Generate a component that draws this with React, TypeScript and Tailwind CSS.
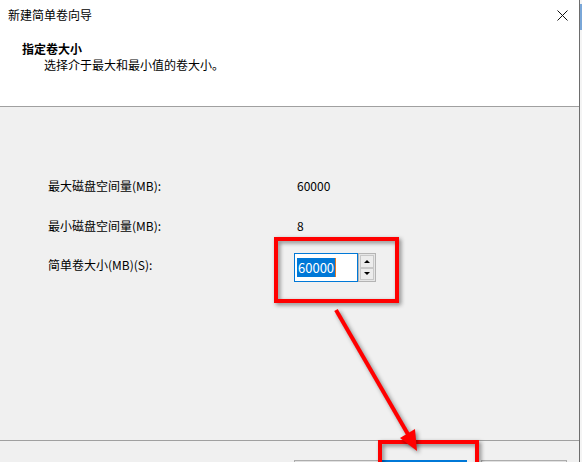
import React from "react";

const font = { fontFamily: '"Noto Sans CJK SC", "Noto Sans", sans-serif' };

function InfoRow({ label, value }: { label: string; value: string }) {
  return (
    <div className="flex h-4 items-center">
      <span className="w-[249px]">{label}</span>
      <span>{value}</span>
    </div>
  );
}

function SizeSpinner() {
  return (
    <div className="flex h-[29px]">
      <div className="flex h-full w-[64px] items-center border border-[#0078d7] bg-white pl-[2px]">
        <span className="bg-[#0078d7] px-px text-[13px] leading-[19px] text-white">60000</span>
        <span className="h-[19px] w-px bg-[#e8781f]" />
      </div>
      <div className="flex h-full w-[18px] flex-col border border-[#b4b4b4] bg-[#e6e6e6] p-px">
        <button className="flex flex-1 items-center justify-center border border-[#c8c8c8] bg-[#ececec]">
          <span className="h-0 w-0 border-x-[3px] border-b-[3px] border-x-transparent border-b-black" />
        </button>
        <button className="flex flex-1 items-center justify-center border border-[#c8c8c8] bg-[#ececec]">
          <span className="h-0 w-0 border-x-[3px] border-t-[3px] border-x-transparent border-t-black" />
        </button>
      </div>
    </div>
  );
}

export default function App() {
  return (
    <div
      className="relative flex h-[462px] w-[582px] overflow-hidden bg-white text-[12px] text-black"
      style={font}
    >
      <div className="flex w-[579px] flex-col">
        {/* title + page header */}
        <div className="h-[106px] shrink-0 bg-white">
          <div className="flex h-[30px] items-center justify-between pl-2 pr-[11px]">
            <span>新建简单卷向导</span>
            <svg width="11" height="11" viewBox="0 0 11 11">
              <path d="M0.5 0.5 L10.5 10.5 M10.5 0.5 L0.5 10.5" stroke="#111" strokeWidth="1" />
            </svg>
          </div>
          <div className="mt-[11px] pl-[22px] font-bold leading-4">指定卷大小</div>
          <div className="pl-[44px] leading-4">选择介于最大和最小值的卷大小。</div>
        </div>
        <div className="h-px shrink-0 bg-[#a0a0a0]" />

        {/* body */}
        <div className="flex h-[333px] shrink-0 flex-col bg-[#f0f0f0] pl-[48px] pt-[71px]">
          <InfoRow label="最大磁盘空间量(MB):" value="60000" />
          <div className="mt-6">
            <InfoRow label="最小磁盘空间量(MB):" value="8" />
          </div>
          <div className="mt-[19px] flex items-start">
            <span className="w-[246px] pt-1 leading-4">简单卷大小(MB)(S):</span>
            <SizeSpinner />
          </div>
        </div>

        <div className="h-px shrink-0 bg-[#a0a0a0]" />

        {/* button bar */}
        <div className="flex min-h-0 flex-1 overflow-hidden bg-[#f0f0f0] pl-[294px] pt-[19px]">
          <div className="h-6 w-[87px] shrink-0 border border-[#adadad] bg-[#e1e1e1]" />
          <div className="h-6 w-[86px] shrink-0 border-2 border-[#0078d7] bg-[#e5f1fb]" />
          <div className="ml-[14px] h-6 w-[86px] shrink-0 border border-[#adadad] bg-[#e1e1e1]" />
        </div>
      </div>

      {/* window edge */}
      <div className="w-px bg-[#6d6d6d]" />
      <div className="flex w-[2px] flex-col bg-[#f4f4f4]">
        <div className="mt-[4px] h-[26px] bg-[#7aa7d8]" />
      </div>

      {/* red callouts */}
      <div className="absolute left-[274px] top-[237px] h-[66px] w-[125px] border-4 border-[#ff0000] [filter:drop-shadow(2px_2px_2px_rgba(0,0,0,0.45))]" />
      <div className="absolute left-[378px] top-[440px] h-[40px] w-[101px] border-4 border-[#ff0000] [filter:drop-shadow(2px_2px_2px_rgba(0,0,0,0.45))]" />
      <svg
        className="absolute left-0 top-0 [filter:drop-shadow(2px_2px_2px_rgba(0,0,0,0.45))]"
        width="582"
        height="462"
      >
        <line x1="336" y1="310" x2="409" y2="436" stroke="#ff0000" strokeWidth="4" />
        <polygon points="417,451 400,438 415,429" fill="#ff0000" />
      </svg>
    </div>
  );
}
